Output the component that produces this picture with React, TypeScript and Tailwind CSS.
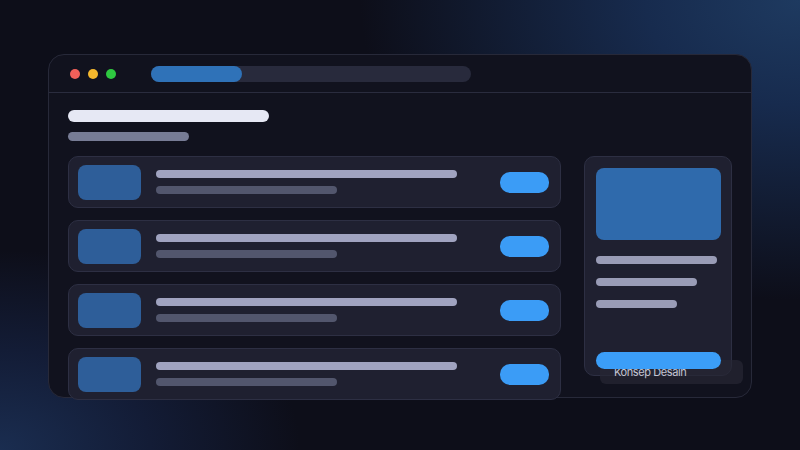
import React from 'react';

const rows = [0, 1, 2, 3];

function Bar({ className }: { className: string }) {
  return <div className={`rounded-full ${className}`} />;
}

function ListRow() {
  return (
    <div className="flex h-[52px] shrink-0 items-center rounded-[10px] border border-[#2d2f43] bg-[#1f2030] pl-[9px] pr-[11px]">
      <div className="h-[35px] w-[63px] shrink-0 rounded-[8px] bg-[#2e5e99]" />
      <div className="ml-[15px] flex flex-1 flex-col gap-[8px]">
        <Bar className="h-[8px] w-[301px] bg-[#a0a3c0]" />
        <Bar className="h-[8px] w-[181px] bg-[#52566d]" />
      </div>
      <div className="h-[21px] w-[49px] shrink-0 rounded-[10px] bg-[#3b9cf6]" />
    </div>
  );
}

function SidePanel() {
  return (
    <div className="flex h-[220px] w-[148px] shrink-0 flex-col rounded-[10px] border border-[#2d2f43] bg-[#1f2030] px-[11px] pb-[6px] pt-[11px]">
      <div className="h-[72px] w-[125px] rounded-[8px] bg-[#2f6aac]" />
      <div className="mt-[16px] flex flex-col gap-[14px]">
        <Bar className="h-[8px] w-[121px] bg-[#999cb6]" />
        <Bar className="h-[8px] w-[101px] bg-[#999cb6]" />
        <Bar className="h-[8px] w-[81px] bg-[#999cb6]" />
      </div>
      <Bar className="relative z-10 mt-auto h-[17px] w-[125px] bg-[#3b9ef8]" />
    </div>
  );
}

export default function App() {
  return (
    <div className="relative h-[450px] w-[800px] overflow-hidden bg-[#0d0e19] bg-[radial-gradient(ellipse_440px_300px_at_100%_0%,#1e3a60_0%,#172b4e_35%,transparent_100%),radial-gradient(ellipse_300px_200px_at_0%_100%,#1a2d50_0%,#131c36_50%,transparent_100%)] pt-[54px] font-['Inter',sans-serif]">
      <div className="relative mx-auto flex h-[344px] w-[704px] flex-col rounded-[16px] border border-[#272939] bg-[#11121e]">
        {/* title bar */}
        <div className="flex h-[38px] shrink-0 items-center border-b border-[#2a2c3e] pl-[21px]">
          <div className="flex gap-[8px]">
            <div className="h-[10px] w-[10px] rounded-full bg-[#f0605a]" />
            <div className="h-[10px] w-[10px] rounded-full bg-[#f5b82e]" />
            <div className="h-[10px] w-[10px] rounded-full bg-[#2ec840]" />
          </div>
          <div className="ml-[35px] flex h-[16px] w-[320px] rounded-full bg-[#282a3c]">
            <div className="h-full w-[91px] rounded-full bg-[#2f72b8]" />
          </div>
        </div>

        {/* page body */}
        <div className="flex flex-col px-[19px] pt-[17px]">
          <Bar className="h-[12px] w-[201px] bg-[#e6e8f4]" />
          <Bar className="mt-[10px] h-[9px] w-[121px] bg-[#777c95]" />
          <div className="mt-[15px] flex gap-[23px]">
            <div className="flex w-[493px] flex-col gap-[12px]">
              {rows.map((r) => (
                <ListRow key={r} />
              ))}
            </div>
            <SidePanel />
          </div>
        </div>

        <div className="absolute left-[551px] top-[305px] flex h-[24px] w-[143px] items-center rounded-[6px] bg-[#262733]/70 pl-[14px] text-[11px] tracking-[-0.4px] text-[#c3c5d3]">
          Konsep Desain
        </div>
      </div>
    </div>
  );
}
